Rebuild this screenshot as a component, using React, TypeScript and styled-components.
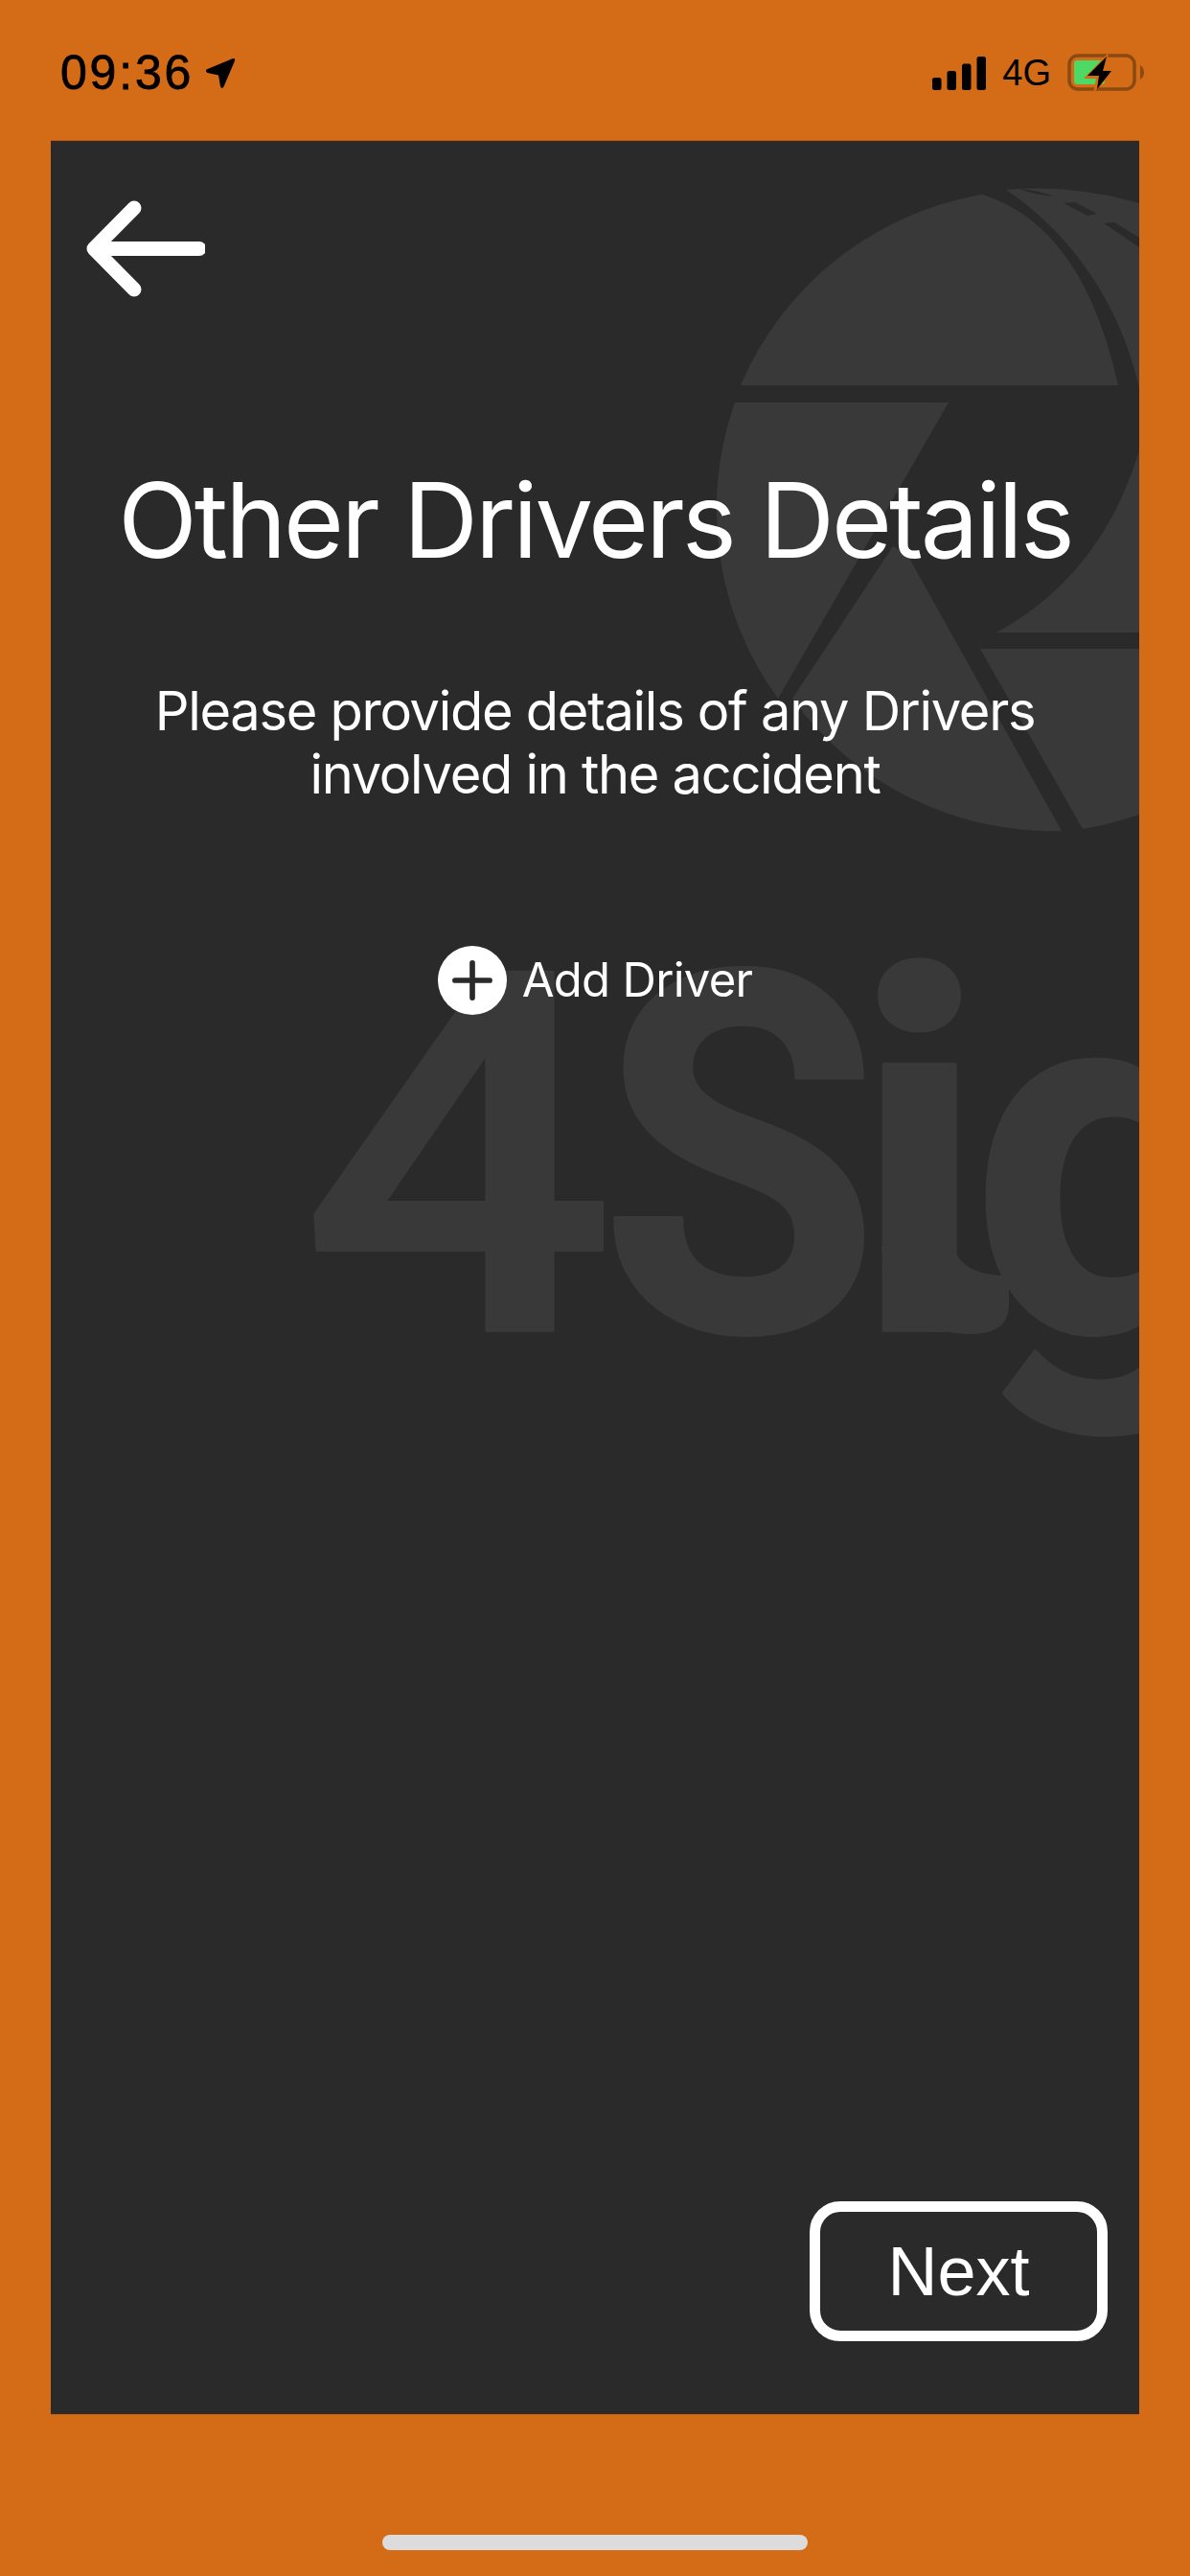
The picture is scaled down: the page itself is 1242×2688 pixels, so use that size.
import React from "react";
import styled, { createGlobalStyle } from "styled-components";
import { Plus } from "lucide-react";

const GlobalStyle = createGlobalStyle`
    html, body { margin: 0; padding: 0; background: #d46b17; }
    body { font-family: Inter, "Liberation Sans", sans-serif; }
`;

const Screen = styled.div`
    width: 1242px;
    height: 2688px;
    background: #d46b17;
    display: flex;
    flex-direction: column;
    overflow: hidden;
`;

const StatusBar = styled.div`
    height: 147px;
    flex: none;
    display: flex;
    justify-content: space-between;
    align-items: flex-start;
    padding: 51px 48px 0 63px;
    box-sizing: border-box;
    color: #000;
`;

const StatusGroup = styled.div`
    display: flex;
    align-items: center;
    gap: 12px;
    height: 50px;
`;

const NetworkGroup = styled(StatusGroup)`
    gap: 17px;
`;

const Clock = styled.span`
    font-family: "Liberation Sans", sans-serif;
    font-size: 50px;
    line-height: 50px;
    letter-spacing: 2.8px;
    -webkit-text-stroke: 0.8px #000;
`;

const Network = styled.span`
    font-family: "Liberation Sans", sans-serif;
    font-size: 38px;
    line-height: 50px;
`;

const Panel = styled.main`
    position: relative;
    margin: 0 53px;
    height: 2372px;
    flex: none;
    background: #2a2a2a;
    box-shadow: 0 1px 0 #cc5c0d, 0 -1px 0 #cc5c0d;
    overflow: hidden;
    display: flex;
    flex-direction: column;
    align-items: center;
    color: #fff;
`;

const Watermark = styled.svg`
    position: absolute;
    left: -53px;
    top: -147px;
    width: 1242px;
    height: 2688px;
`;

const WatermarkText = styled.text<{ $weight?: number }>`
    font-family: Roboto, sans-serif;
    font-weight: ${(props) => props.$weight ?? 700};
    font-size: 525px;
    fill: #393939;
    stroke: #393939;
    stroke-width: 4px;
    stroke-linejoin: round;
`;

const BackButton = styled.button`
    position: relative;
    align-self: flex-start;
    margin: 62px 0 0 37px;
    padding: 0;
    background: none;
    border: none;
    display: flex;
`;

const Title = styled.h1`
    position: relative;
    margin: 173px 0 0;
    font-size: 108px;
    line-height: 120px;
    font-weight: 400;
    letter-spacing: -3px;
    white-space: nowrap;
`;

const Subtitle = styled.p`
    position: relative;
    margin: 106px 0 0;
    font-size: 56px;
    line-height: 66px;
    font-weight: 400;
    letter-spacing: -1.3px;
    text-align: center;
`;

const AddRow = styled.div`
    position: relative;
    margin-top: 146px;
    display: flex;
    align-items: center;
    gap: 16px;
    font-size: 49px;
    line-height: 72px;
    letter-spacing: -0.7px;
`;

const AddCircle = styled.span`
    width: 72px;
    height: 72px;
    border-radius: 50%;
    background: #fff;
    color: #2a2a2a;
    display: flex;
    align-items: center;
    justify-content: center;
`;

const NextButton = styled.button`
    position: absolute;
    right: 33px;
    bottom: 76px;
    width: 311px;
    height: 146px;
    box-sizing: border-box;
    background: #2a2a2a;
    border: 11px solid #fff;
    border-radius: 32px;
    color: #fff;
    font-family: "Liberation Sans", sans-serif;
    font-size: 72px;
    padding: 0;
`;

const HomeArea = styled.div`
    flex: 1;
    display: flex;
    justify-content: center;
    padding-top: 126px;
`;

const HomeBar = styled.div`
    width: 444px;
    height: 16px;
    border-radius: 8px;
    background: #dcdcdc;
`;

export default function App() {
    return (
        <Screen>
            <GlobalStyle />
            <StatusBar>
                <StatusGroup>
                    <Clock>09:36</Clock>
                    <svg width="32" height="33" viewBox="0 0 32 33">
                        <path
                            d="M1.5 12.5 L28.5 1.2 Q32 0 31 3.5 L19.5 30.5 Q17.5 33.5 16 30 L14 18.5 L2.5 16 Q0 14.5 1.5 12.5 Z"
                            fill="#000"
                        />
                    </svg>
                </StatusGroup>
                <NetworkGroup>
                    <svg width="56" height="35" viewBox="0 0 56 35">
                        <rect x="0" y="22" width="9.5" height="13" rx="2.5" fill="#000" />
                        <rect x="15.5" y="15" width="9.5" height="20" rx="2.5" fill="#000" />
                        <rect x="31" y="7.5" width="9.5" height="27.5" rx="2.5" fill="#000" />
                        <rect x="46.5" y="0" width="9.5" height="35" rx="2.5" fill="#000" />
                    </svg>
                    <Network>4G</Network>
                    <svg width="80" height="40" viewBox="0 0 80 40">
                        <rect x="2" y="2" width="68" height="35" rx="9" fill="none" stroke="#8a4a12" strokeWidth="3.5" />
                        <path d="M76 12 Q80 15 80 19.5 Q80 24 76 27 Z" fill="#8a4a12" />
                        <rect x="7" y="7" width="32" height="25" rx="3" fill="#4cd964" />
                        <path d="M43 -1 L17 26 L30 26 L27 41 L51 15 L40 15 Z" fill="#d46b17" />
                        <path d="M41 3 L21 23 L33 23 L31 37 L46 18 L37 18 Z" fill="#000" />
                    </svg>
                </NetworkGroup>
            </StatusBar>

            <Panel>
                <Watermark viewBox="0 0 1242 2688" aria-hidden="true">
                    <g fill="#393939">
                        {/* aperture logo */}
                        <path d="M773 402 A335 335 0 0 1 1025 203 Q1130 235 1167 402 Z" />
                        <path d="M767 420 L990 420 L812 729 A335 335 0 0 1 767 420 Z" />
                        <path d="M932 570 L827 729 A335 335 0 0 0 1108 867 L947 579 Z" />
                        <path d="M1023 677 L1189 677 L1189 850 Q1160 860 1130 865 Z" />
                        <path d="M1040 660 Q1150 600 1189 470 L1189 660 Z" />
                        <path d="M1050 198 Q1120 192 1189 212 L1189 405 C1170 320 1120 245 1050 198 Z" />
                    </g>
                    <g fill="#2a2a2a">
                        <path d="M1063 197 Q1085 199 1100 205 Q1080 203 1063 197 Z" />
                        <path d="M1110 212 L1122 211 L1145 223 L1135 225 Z" />
                        <path d="M1152 233 L1163 232 L1189 248 L1189 258 Z" />
                    </g>
                    {/* logotype, glyphs stretched one by one to the logo's widths */}
                    <WatermarkText $weight={500} transform="translate(314 1388) scale(1.1 1)">4</WatermarkText>
                    <WatermarkText transform="translate(626 1388) scale(0.9 1)">S</WatermarkText>
                    <WatermarkText x="890 1013" y="1388">ig</WatermarkText>
                    {/* tail on the i of the logotype */}
                    <path
                        d="M995 1295 Q998 1331 1053 1331 L1053 1365 Q1050 1392 1015 1392 Q925 1392 920 1300 Z"
                        fill="#393939"
                    />
                </Watermark>

                <BackButton aria-label="Back">
                    <svg width="124" height="101" viewBox="0 0 124 101">
                        <path
                            d="M118 50.5 H10 M50 8 L8 50.5 L50 93"
                            fill="none"
                            stroke="#fff"
                            strokeWidth="15"
                            strokeLinecap="round"
                            strokeLinejoin="round"
                        />
                    </svg>
                </BackButton>
                <Title>Other Drivers Details</Title>
                <Subtitle>
                    Please provide details of any Drivers
                    <br />
                    involved in the accident
                </Subtitle>
                <AddRow>
                    <AddCircle>
                        <Plus size={62} strokeWidth={2.2} />
                    </AddCircle>
                    Add Driver
                </AddRow>
                <NextButton>Next</NextButton>
            </Panel>

            <HomeArea>
                <HomeBar />
            </HomeArea>
        </Screen>
    );
}
